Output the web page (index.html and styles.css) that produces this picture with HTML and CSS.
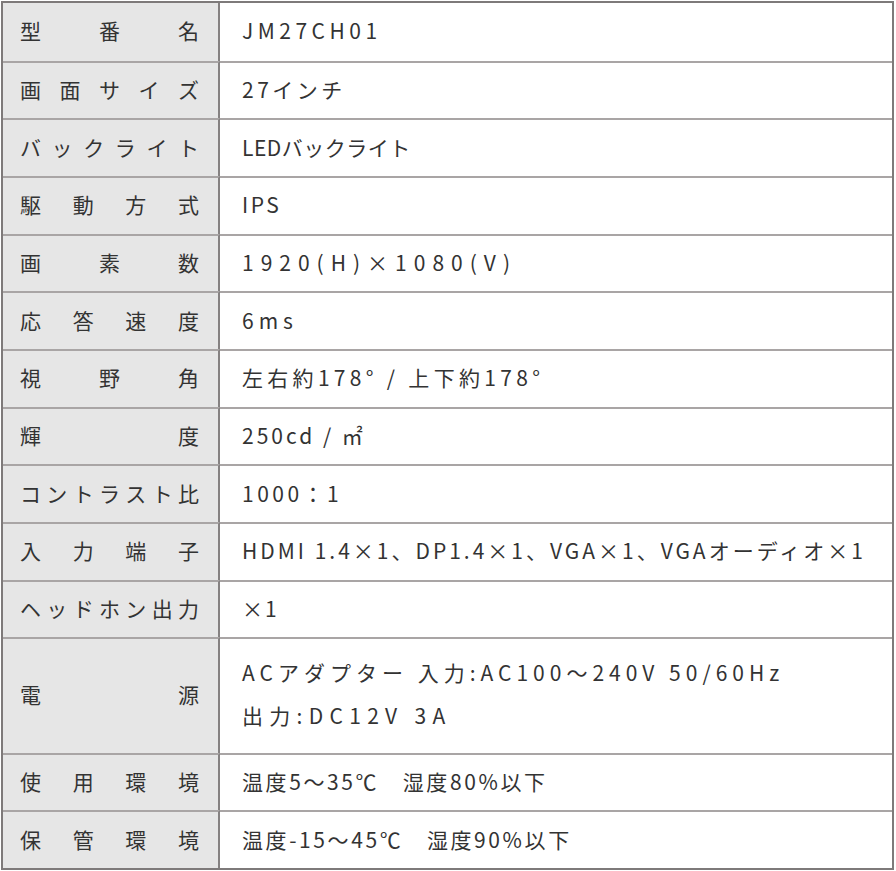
FILE: index.html
```html
<!DOCTYPE html>
<html lang="ja">
<head>
<meta charset="utf-8">
<link rel="stylesheet" href="styles.css">
</head>
<body>
<div class="spec">
  <div class="th"><span>型</span><span>番</span><span>名</span></div>
  <div class="td ls-45">JM27CH01</div>

  <div class="th"><span>画</span><span>面</span><span>サ</span><span>イ</span><span>ズ</span></div>
  <div class="td ls-35">27インチ</div>

  <div class="th"><span>バ</span><span>ッ</span><span>ク</span><span>ラ</span><span>イ</span><span>ト</span></div>
  <div class="td">LEDバックライト</div>

  <div class="th"><span>駆</span><span>動</span><span>方</span><span>式</span></div>
  <div class="td ls-25">IPS</div>

  <div class="th"><span>画</span><span>素</span><span>数</span></div>
  <div class="td ls-7">1920(H)×1080(V)</div>

  <div class="th"><span>応</span><span>答</span><span>速</span><span>度</span></div>
  <div class="td ls-5">6ms</div>

  <div class="th"><span>視</span><span>野</span><span>角</span></div>
  <div class="td ls-43">左右約178°&nbsp;/&nbsp;上下約178°</div>

  <div class="th"><span>輝</span><span>度</span></div>
  <div class="td ls-3">250cd&nbsp;/&nbsp;㎡</div>

  <div class="th"><span>コ</span><span>ン</span><span>ト</span><span>ラ</span><span>ス</span><span>ト</span><span>比</span></div>
  <div class="td ls-35">1000：1</div>

  <div class="th"><span>入</span><span>力</span><span>端</span><span>子</span></div>
  <div class="td ls-3">HDMI 1.4×1、DP1.4×1、VGA×1、VGAオーディオ×1</div>

  <div class="th"><span>ヘ</span><span>ッ</span><span>ド</span><span>ホ</span><span>ン</span><span>出</span><span>力</span></div>
  <div class="td ls-2">×1</div>

  <div class="th"><span>電</span><span>源</span></div>
  <div class="td multi"><div class="ls-5">ACアダプター 入力:AC100～240V 50/60Hz</div><div class="ls-63">出力:DC12V 3A</div></div>

  <div class="th"><span>使</span><span>用</span><span>環</span><span>境</span></div>
  <div class="td ls-26">温度5～35℃　湿度80%以下</div>

  <div class="th"><span>保</span><span>管</span><span>環</span><span>境</span></div>
  <div class="td ls-26">温度-15～45℃　湿度90%以下</div>
</div>
</body>
</html>
```
FILE: styles.css
```css
html, body {
  margin: 0;
  padding: 0;
  background: #ffffff;
}

body {
  padding: 1px;
}

.spec {
  box-sizing: border-box;
  width: 893px;
  height: 869px;
  border: 2px solid #7e7a7a;
  display: grid;
  grid-template-columns: 217px 1fr;
  grid-template-rows: repeat(11, 1fr) 2fr 1fr 1fr;
  font-family: "Noto Sans CJK JP", "Noto Sans", sans-serif;
  font-size: 21px;
  color: #333333;
}

.th,
.td {
  box-sizing: border-box;
  display: flex;
  align-items: center;
  border-top: 2px solid #a9a5a5;
  padding-bottom: 3px;
}

.th:nth-child(1),
.td:nth-child(2) {
  border-top: none;
}

.th {
  background: #e6e6e6;
  border-right: 2px solid #858181;
  justify-content: space-between;
  padding-left: 17px;
  padding-right: 19px;
}

.td {
  padding-left: 22px;
  letter-spacing: 0.5px;
}

.ls-2 { letter-spacing: 2px; }
.ls-25 { letter-spacing: 2.5px; }
.ls-26 { letter-spacing: 2.6px; }
.ls-3 { letter-spacing: 3px; }
.ls-35 { letter-spacing: 3.5px; }
.ls-43 { letter-spacing: 4.3px; }
.ls-45 { letter-spacing: 4.5px; }
.ls-5 { letter-spacing: 5px; }
.ls-63 { letter-spacing: 6.3px; }
.ls-7 { letter-spacing: 7px; }

.multi {
  flex-direction: column;
  align-items: flex-start;
  justify-content: center;
  line-height: 43px;
}
```
